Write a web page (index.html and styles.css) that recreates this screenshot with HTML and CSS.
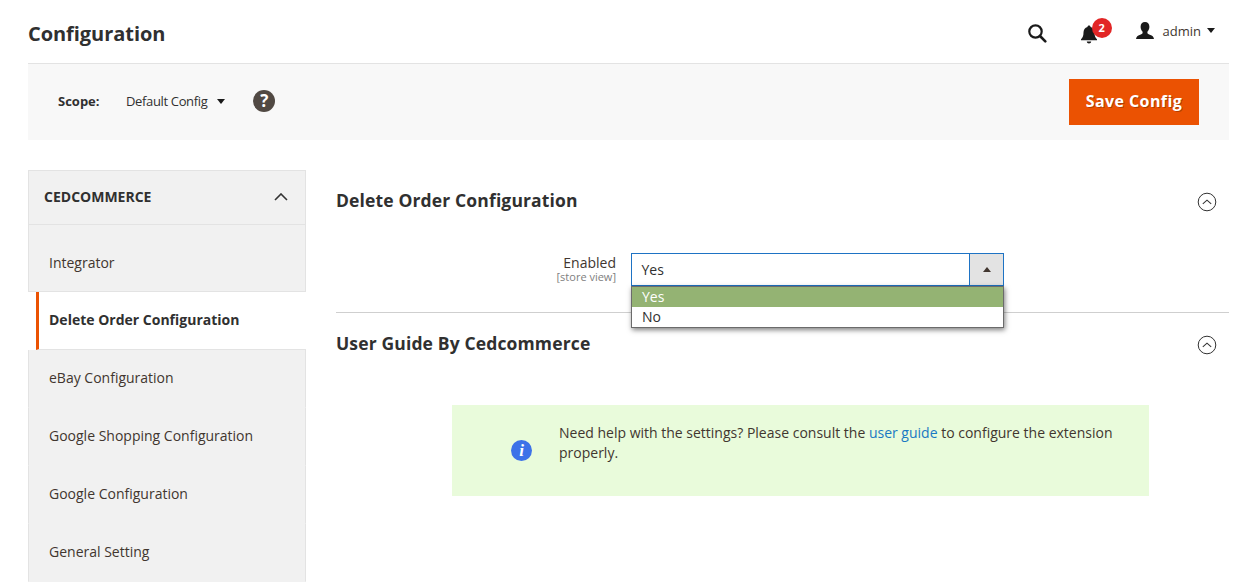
FILE: index.html
```html
<!DOCTYPE html>
<html lang="en">
<head>
<meta charset="utf-8">
<title>Configuration</title>
<link rel="stylesheet" href="styles.css">
</head>
<body>
<div class="page">
  <header class="top">
    <h1 class="title">Configuration</h1>
    <div class="actions">
      <svg class="icon-search" width="20" height="20" viewBox="0 0 20 20"><circle cx="8.5" cy="8.5" r="6.2" fill="none" stroke="#1a1a1a" stroke-width="2.2"/><path d="M13 13l5.3 5.3" stroke="#1a1a1a" stroke-width="2.6" stroke-linecap="round"/></svg>
      <div class="bell">
        <svg width="18" height="20" viewBox="0 0 18 20"><path d="M9 1.5c.9 0 1.5.6 1.5 1.4 2.7.7 4 2.900 4 5.600 0 3.500.8 5 2.500 6.700v1H1v-1c1.700-1.700 2.500-3.200 2.500-6.700 0-2.700 1.300-4.900 4-5.600C7.500 2.100 8.100 1.500 9 1.500zM6.800 17.500h4.400c0 1.200-1 2-2.200 2s-2.200-.8-2.200-2z" fill="#1a1a1a"/></svg>
        <span class="badge">2</span>
      </div>
      <div class="user">
        <svg width="20" height="20" viewBox="0 0 20 20"><path d="M10 1c2.700 0 4.400 2 4.400 4.800 0 2-.8 3.800-2 4.900v1.300c0 .8 1.300 1.300 3 1.900 1.700.7 3.300 1.400 3.600 4.100H1c.3-2.700 1.900-3.400 3.600-4.100 1.700-.6 3-1.100 3-1.900v-1.300c-1.200-1.100-2-2.900-2-4.900C5.600 3 7.300 1 10 1z" fill="#1a1a1a"/></svg>
        <span class="user-name">admin</span>
        <span class="caret caret-user"></span>
      </div>
    </div>
  </header>

  <section class="scope-bar">
    <div class="scope">
      <span class="scope-label">Scope:</span>
      <span class="scope-value">Default Config</span>
      <span class="caret caret-scope"></span>
      <span class="help">?</span>
    </div>
    <button class="save" type="button">Save Config</button>
  </section>

  <div class="columns">
    <aside class="side">
      <div class="side-head">
        <span>CEDCOMMERCE</span>
        <svg width="14" height="8" viewBox="0 0 14 8"><path d="M1 7l6-6 6 6" fill="none" stroke="#333" stroke-width="1.600"/></svg>
      </div>
      <ul class="side-list">
        <li class="side-item first">Integrator</li>
        <li class="side-item active">Delete Order Configuration</li>
        <li class="side-item">eBay Configuration</li>
        <li class="side-item">Google Shopping Configuration</li>
        <li class="side-item">Google Configuration</li>
        <li class="side-item">General Setting</li>
      </ul>
    </aside>

    <main class="content">
      <section class="panel panel-delete">
        <div class="panel-head">
          <h2 class="panel-title">Delete Order Configuration</h2>
          <svg class="collapse" width="20" height="20" viewBox="0 0 20 20"><circle cx="10" cy="10" r="8.800" fill="none" stroke="#333" stroke-width="1"/><path d="M5.800 11.800l4.200-3.600 4.200 3.600" fill="none" stroke="#333" stroke-width="1.100"/></svg>
        </div>
        <div class="field">
          <div class="field-label">
            <div class="label-main">Enabled</div>
            <div class="label-scope">[store view]</div>
          </div>
          <div class="select-wrap">
            <div class="select">
              <span class="select-value">Yes</span>
              <span class="select-btn"><span class="caret-up"></span></span>
            </div>
            <ul class="options">
              <li class="option selected">Yes</li>
              <li class="option">No</li>
            </ul>
          </div>
        </div>
      </section>

      <section class="panel panel-guide">
        <div class="panel-head">
          <h2 class="panel-title">User Guide By Cedcommerce</h2>
          <svg class="collapse" width="20" height="20" viewBox="0 0 20 20"><circle cx="10" cy="10" r="8.800" fill="none" stroke="#333" stroke-width="1"/><path d="M5.800 11.800l4.200-3.600 4.200 3.600" fill="none" stroke="#333" stroke-width="1.100"/></svg>
        </div>
        <div class="notice">
          <span class="info">i</span>
          <p class="notice-text">Need help with the settings? Please consult the <a class="link" href="#">user guide</a> to configure the extension properly.</p>
        </div>
      </section>
    </main>
  </div>
</div>
</body>
</html>
```

FILE: styles.css
```css
html, body {
  margin: 0;
  height: 583px;
  overflow: hidden;
  background: #fff;
}
body {
  font-family: "Open Sans", "Noto Sans", sans-serif;
  color: #303030;
  font-size: 14px;
}
.page {
  padding: 0 30px 0 28px;
}
.top {
  height: 63px;
  border-bottom: 1px solid #e3e3e3;
  display: flex;
  justify-content: space-between;
  align-items: center;
}
.title {
  margin: 0;
  font-size: 20px;
  font-weight: 700;
  letter-spacing: -0.05px;
  color: #303030;
  line-height: 28px;
  position: relative;
  top: 2px;
}
.actions {
  display: flex;
  align-items: center;
}
.icon-search {
  margin-right: 33px;
  position: relative;
  top: 1px;
}
.bell {
  position: relative;
  width: 18px;
  height: 20px;
  margin-right: 37px;
  top: 2px;
}
.badge {
  position: absolute;
  left: 12px;
  top: -6px;
  width: 20px;
  height: 20px;
  border-radius: 50%;
  background: #e22626;
  color: #fff;
  font-size: 11px;
  font-weight: 700;
  line-height: 20px;
  text-align: center;
}
.user {
  display: flex;
  align-items: center;
  margin-right: 14px;
  position: relative;
  top: -1px;
}
.user-name {
  margin-left: 8px;
  font-size: 13px;
  color: #41362f;
}
.caret {
  width: 0;
  height: 0;
  border-style: solid;
  border-width: 5px 4.500px 0;
  border-color: #1a1a1a transparent transparent;
}
.caret-user {
  margin-left: 6px;
}
.scope-bar {
  height: 76px;
  background: #f8f8f8;
  display: flex;
  justify-content: space-between;
  align-items: center;
  padding: 0 30px;
}
.scope {
  display: flex;
  align-items: center;
  position: relative;
  top: -1px;
}
.scope-label {
  font-size: 13px;
  font-weight: 700;
  width: 68px;
}
.scope-value {
  font-size: 13px;
  letter-spacing: -0.35px;
  color: #303030;
}
.caret-scope {
  margin-left: 10px;
}
.help {
  width: 22px;
  height: 22px;
  margin-left: 28px;
  border-radius: 50%;
  background: #514943;
  color: #fff;
  font-size: 17px;
  font-weight: 700;
  line-height: 22px;
  text-align: center;
}
.save {
  width: 130px;
  height: 46px;
  border: 0;
  padding: 0 0 2px;
  background: #eb5202;
  color: #fff;
  font-family: inherit;
  font-size: 16px;
  font-weight: 700;
  letter-spacing: 0.4px;
  text-shadow: 1px 1px 0 rgba(0, 0, 0, 0.25);
}
.columns {
  display: flex;
  margin-top: 30px;
  gap: 30px;
}
.side {
  width: 278px;
  flex: none;
}
.side-head {
  height: 51px;
  padding: 0 17px 2px 15px;
  border: 1px solid #e3e3e3;
  background: #f1f1f1;
  display: flex;
  align-items: center;
  justify-content: space-between;
  width: 244px;
  font-size: 14px;
  font-weight: 700;
  color: #303030;
}
.side-list {
  list-style: none;
  margin: 0;
  padding: 0;
}
.side-item {
  height: 56px;
  padding-bottom: 1px;
  line-height: 55px;
  background: #f1f1f1;
  padding-left: 20px;
  border-left: 1px solid #e3e3e3;
  border-right: 1px solid #e3e3e3;
  border-bottom: 1px solid #f1f1f1;
  color: #41362f;
  font-size: 14px;
}
.side-item.first {
  height: 66px;
  padding-bottom: 0;
  line-height: 76px;
  border-bottom: 1px solid #e3e3e3;
}
.side-item.active {
  background: #fff;
  border-left: 3px solid #eb5202;
  border-right: 0;
  border-bottom: 1px solid #e3e3e3;
  margin-left: 8px;
  padding-left: 10px;
  font-weight: 700;
  color: #303030;
}
.content {
  flex: 1;
  min-width: 0;
}
.panel-head {
  display: flex;
  justify-content: space-between;
  align-items: center;
}
.panel-delete {
  height: 142px;
  border-bottom: 1px solid #cfcfcf;
}
.panel-delete .panel-head {
  height: 60px;
}
.panel-guide .panel-head {
  height: 60px;
  padding-bottom: 2px;
}
.panel-title {
  margin: 0;
  font-size: 17.500px;
  font-weight: 700;
  letter-spacing: 0.14px;
  color: #303030;
}
.collapse {
  margin-right: 12px;
  position: relative;
  top: 2px;
}
.field {
  display: flex;
  margin-top: 23px;
  align-items: flex-start;
}
.field-label {
  width: 280px;
  text-align: right;
  padding-top: 1px;
}
.label-main {
  font-size: 14px;
  line-height: 18px;
  color: #41362f;
}
.label-scope {
  font-size: 11px;
  line-height: 9px;
  color: #808080;
}
.select-wrap {
  margin-left: 15px;
  width: 373px;
  position: relative;
}
.select {
  height: 31px;
  border: 1px solid #1e73c4;
  display: flex;
  background: #fff;
  align-items: center;
  justify-content: space-between;
}
.select-value {
  padding: 0 0 1px 9.500px;
  font-size: 14px;
  color: #303030;
}
.select-btn {
  width: 33px;
  height: 31px;
  background: #e3e3e3;
  border-left: 1px solid #1e73c4;
  display: flex;
  align-items: center;
  justify-content: center;
}
.caret-up {
  width: 0;
  height: 0;
  border-style: solid;
  border-width: 0 4px 5px;
  border-color: transparent transparent #41362f;
}
.options {
  list-style: none;
  margin: 0;
  padding: 0;
  position: absolute;
  left: 0;
  right: 0;
  top: 33px;
  border: 1px solid #6b6b6b;
  background: #fff;
  box-shadow: 1px 2px 5px rgba(0, 0, 0, 0.5);
}
.option {
  height: 20px;
  line-height: 20px;
  padding-left: 10px;
  font-size: 14px;
  color: #303030;
}
.option.selected {
  background: #94b373;
  color: #fff;
}
.notice {
  width: 697px;
  height: 91px;
  margin: 30px 0 0 116px;
  background: #e9fbdb;
  display: flex;
  align-items: center;
  box-sizing: border-box;
}
.info {
  flex: none;
  width: 21px;
  height: 21px;
  margin: 0 27px 0 59px;
  border-radius: 50%;
  background: #3d72e8;
  color: #fff;
  font-family: "Liberation Serif", serif;
  font-size: 17px;
  font-style: italic;
  font-weight: 700;
  line-height: 21px;
  text-align: center;
}
.notice-text {
  margin: 0;
  width: 570px;
  font-size: 14px;
  line-height: 20px;
  color: #41362f;
  position: relative;
  top: -8px;
}
.link {
  color: #1979c3;
  text-decoration: none;
}
```
